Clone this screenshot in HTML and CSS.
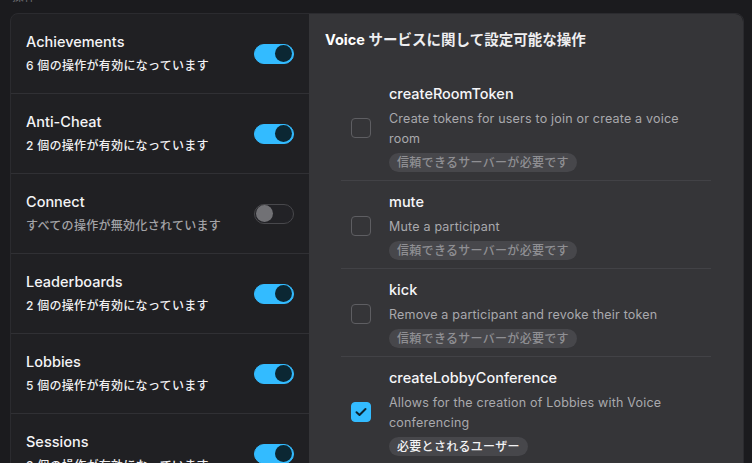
FILE: index.html
```html
<!DOCTYPE html>
<html lang="ja">
<head>
<meta charset="utf-8">
<link rel="stylesheet" href="styles.css">
</head>
<body>
<div class="page-label">操作</div>
<div class="card">
  <div class="services">
    <div class="svc">
      <div class="svc-text">
        <div class="svc-name">Achievements</div>
        <div class="svc-sub">6 個の操作が有効になっています</div>
      </div>
      <span class="toggle on"><span class="knob"></span></span>
    </div>
    <div class="svc">
      <div class="svc-text">
        <div class="svc-name">Anti-Cheat</div>
        <div class="svc-sub">2 個の操作が有効になっています</div>
      </div>
      <span class="toggle on"><span class="knob"></span></span>
    </div>
    <div class="svc">
      <div class="svc-text">
        <div class="svc-name">Connect</div>
        <div class="svc-sub off">すべての操作が無効化されています</div>
      </div>
      <span class="toggle"><span class="knob"></span></span>
    </div>
    <div class="svc">
      <div class="svc-text">
        <div class="svc-name">Leaderboards</div>
        <div class="svc-sub">2 個の操作が有効になっています</div>
      </div>
      <span class="toggle on"><span class="knob"></span></span>
    </div>
    <div class="svc">
      <div class="svc-text">
        <div class="svc-name">Lobbies</div>
        <div class="svc-sub">5 個の操作が有効になっています</div>
      </div>
      <span class="toggle on"><span class="knob"></span></span>
    </div>
    <div class="svc">
      <div class="svc-text">
        <div class="svc-name">Sessions</div>
        <div class="svc-sub">3 個の操作が有効になっています</div>
      </div>
      <span class="toggle on"><span class="knob"></span></span>
    </div>
  </div>
  <div class="panel">
    <div class="panel-title"><b>Voice</b> サービスに関して設定可能な操作</div>
    <div class="ops">
      <div class="op">
        <span class="check"></span>
        <div class="op-body">
          <div class="op-name">createRoomToken</div>
          <div class="op-desc">Create tokens for users to join or create a voice room</div>
          <span class="tag">信頼できるサーバーが必要です</span>
        </div>
      </div>
      <div class="op">
        <span class="check"></span>
        <div class="op-body">
          <div class="op-name">mute</div>
          <div class="op-desc">Mute a participant</div>
          <span class="tag">信頼できるサーバーが必要です</span>
        </div>
      </div>
      <div class="op">
        <span class="check"></span>
        <div class="op-body">
          <div class="op-name">kick</div>
          <div class="op-desc">Remove a participant and revoke their token</div>
          <span class="tag">信頼できるサーバーが必要です</span>
        </div>
      </div>
      <div class="op">
        <span class="check checked"><svg width="12" height="10" viewBox="0 0 12 10"><path d="M1.5 5.2 L4.5 8 L10.5 2" fill="none" stroke="#0d2430" stroke-width="2" stroke-linecap="round" stroke-linejoin="round"/></svg></span>
        <div class="op-body">
          <div class="op-name">createLobbyConference</div>
          <div class="op-desc">Allows for the creation of Lobbies with Voice conferencing</div>
          <span class="tag user">必要とされるユーザー</span>
        </div>
      </div>
    </div>
  </div>
</div>
</body>
</html>
```

FILE: styles.css
```css
* { box-sizing: border-box; }
html, body {
  margin: 0;
  padding: 0;
  background: #1b1b1e;
  height: 100%;
  overflow: hidden;
}
body {
  font-family: "Inter", "Noto Sans CJK JP", sans-serif;
  color: #f2f2f4;
}
.page-label {
  margin: -11px 0 0 12px;
  font-size: 12px;
  line-height: 16px;
  color: #6d6d72;
}
.card {
  margin: 8px 8px 0 10px;
  display: flex;
  border: 1px solid #2b2b2f;
  border-radius: 8px;
  background: #202023;
  height: 470px;
  overflow: hidden;
}
.services {
  width: 298px;
  flex: none;
}
.svc {
  height: 80px;
  display: flex;
  align-items: center;
  justify-content: space-between;
  padding: 0 15px 0 15px;
  border-bottom: 1px solid #303034;
}
.svc-name {
  font-size: 14.5px;
  line-height: 20px;
  font-weight: 500;
  color: #f4f4f6;
}
.svc-sub {
  margin-top: 4px;
  font-size: 12px;
  line-height: 20px;
  font-weight: 500;
  color: #f0f0f2;
  letter-spacing: 0.3px;
}
.svc-sub.off { color: #a3a3a7; }
.toggle {
  width: 40px;
  height: 20px;
  border-radius: 10px;
  border: 1px solid #48484c;
  background: #222226;
  display: flex;
  align-items: center;
  padding: 0 1px;
  flex: none;
}
.toggle .knob {
  width: 17px;
  height: 17px;
  border-radius: 50%;
  background: #717175;
}
.toggle.on {
  background: #33bbff;
  border-color: #33bbff;
  justify-content: flex-end;
}
.toggle.on .knob { background: #0b2733; }
.panel {
  flex: 1;
  background: #353538;
  border-top-right-radius: 8px;
  padding: 16px 32px 0 16px;
}
.panel-title {
  font-size: 14.5px;
  line-height: 20px;
  font-weight: 600;
  color: #eeeef0;
}
.panel-title b { font-weight: 700; color: #fff; }
.ops {
  margin: 23px 0 0 16px;
}
.op {
  display: flex;
  align-items: center;
  padding: 11px 10px 8px 10px;
  border-bottom: 1px solid #424246;
}
.op:last-child { border-bottom: none; }
.check {
  width: 20px;
  height: 20px;
  border-radius: 4px;
  border: 1px solid #5e5e62;
  flex: none;
  margin-right: 18px;
  display: flex;
  align-items: center;
  justify-content: center;
}
.check.checked {
  background: #33bbff;
  border-color: #33bbff;
}
.op-body { flex: 1; }
.op-name {
  font-size: 14.5px;
  line-height: 20px;
  font-weight: 500;
  color: #f6f6f8;
  margin-bottom: 5px;
}
.op-desc {
  font-size: 12.5px;
  line-height: 20px;
  color: #a9a9ad;
  letter-spacing: 0.2px;
}
.tag {
  display: inline-block;
  margin-top: 4px;
  height: 19px;
  line-height: 19px;
  padding: 0 8px;
  border-radius: 10px;
  background: #47474b;
  color: #8f8f93;
  font-size: 12px;
  letter-spacing: 0.3px;
  font-weight: 500;
}
.tag.user { color: #f2f2f4; }
```
